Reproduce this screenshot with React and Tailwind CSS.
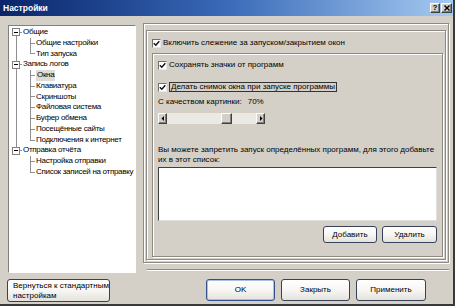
import React from 'react';

const font = "font-['Liberation_Sans',Arial,sans-serif]";

const tree = [
  { label: 'Общие', children: ['Общие настройки', 'Тип запуска'] },
  {
    label: 'Запись логов',
    children: ['Окна', 'Клавиатура', 'Скриншоты', 'Файловая система', 'Буфер обмена', 'Посещённые сайты', 'Подключения к интернет'],
  },
  { label: 'Отправка отчёта', children: ['Настройка отправки', 'Список записей на отправку'] },
];

function Check() {
  return (
    <span className="w-[9px] h-[9px] shrink-0 bg-white border border-t-[#6f6f6f] border-l-[#6f6f6f] border-r-[#e8e8e8] border-b-[#e8e8e8] flex items-center justify-center">
      <svg width="7" height="7" viewBox="0 0 7 7">
        <path d="M0.8 3.2 L2.8 5.3 L6.3 1.2" stroke="#111" strokeWidth="1.4" fill="none" />
      </svg>
    </span>
  );
}

function XpButton({ children, className = '', primary = false }) {
  return (
    <button
      className={
        'rounded-[3px] border bg-linear-to-b from-white via-[#f7f6f3] to-[#e4e2dc] text-black leading-[10px] ' +
        (primary ? 'border-[#34508c] shadow-[inset_0_0_0_1px_#a9bfe6] ' : 'border-[#35425a] ') +
        className
      }
    >
      {children}
    </button>
  );
}

function Raised({ className = '', children }) {
  return (
    <span
      className={
        'bg-[#d4d0c8] border border-t-white border-l-white border-r-[#404040] border-b-[#404040] shadow-[inset_-1px_-1px_0_#808080] flex items-center justify-center shrink-0 ' +
        className
      }
    >
      {children}
    </span>
  );
}

function TopRow({ label, first, last }) {
  return (
    <div className="flex h-[10.77px]">
      <span className="w-[3px] shrink-0" />
      <span className="w-[8px] shrink-0 flex flex-col items-center">
        <span className={first ? 'flex-1' : 'flex-1 w-px bg-[#909090]'} />
        <span className="w-[8px] h-[8px] shrink-0 border border-[#808080] bg-white flex items-center justify-center">
          <span className="w-[4px] h-px bg-black" />
        </span>
        <span className={last ? 'flex-1' : 'flex-1 w-px bg-[#909090]'} />
      </span>
      <span className="w-[2px] shrink-0 flex flex-col">
        <span className="flex-1 border-b border-[#909090]" />
        <span className="flex-1" />
      </span>
      <span className="ml-px leading-[10.77px] whitespace-nowrap">{label}</span>
    </div>
  );
}

function ChildRow({ label, groupLast, last, selected }) {
  return (
    <div className="flex h-[10.77px]">
      <span className="w-[3px] shrink-0" />
      <span className="w-[8px] shrink-0 flex justify-center">
        <span className={groupLast ? 'w-px' : 'w-px bg-[#909090]'} />
      </span>
      <span className="w-[10px] shrink-0" />
      <span className="w-[5px] shrink-0 flex flex-col">
        <span className="flex-1 border-l border-b border-[#909090]" />
        <span className={last ? 'flex-1' : 'flex-1 border-l border-[#909090]'} />
      </span>
      <span className={'ml-px leading-[10.77px] whitespace-nowrap ' + (selected ? 'bg-[#dedcd6] px-px' : '')}>
        {label}
      </span>
    </div>
  );
}

export default function App() {
  return (
    <div
      className={
        'w-[455px] h-[306px] bg-[#d4d0c8] flex flex-col overflow-hidden border-r-2 border-b-2 border-[#3a3a3a] text-[8px] text-black ' +
        font
      }
    >
      {/* title bar */}
      <div className="h-[16px] shrink-0 bg-linear-to-r from-[#0a246a] via-[#3a6ab8] to-[#a6caf0] flex items-center pl-[3px] pr-px">
        <span className="text-white font-bold text-[8.5px] leading-none">Настройки</span>
        <span className="ml-auto flex gap-px">
          <Raised className="w-[10px] h-[10px] text-[8px] font-bold leading-none">?</Raised>
          <Raised className="w-[11px] h-[10px]">
            <svg width="6" height="6" viewBox="0 0 6 6">
              <path d="M0.5 0.5 L5.5 5.5 M5.5 0.5 L0.5 5.5" stroke="#000" strokeWidth="1.4" />
            </svg>
          </Raised>
        </span>
      </div>

      <div className="flex flex-1">
        {/* left column */}
        <div className="w-[143px] shrink-0 pl-[7px] pt-[9px] flex flex-col">
          <div className="ml-px w-[128px] h-[248px] overflow-hidden bg-white border border-t-[#808080] border-l-[#808080] border-r-white border-b-white pt-px tracking-[-0.3px]">
            {tree.map((g, gi) => (
              <React.Fragment key={g.label}>
                <TopRow label={g.label} first={gi === 0} last={gi === tree.length - 1} />
                {g.children.map((c, ci) => (
                  <ChildRow
                    key={c}
                    label={c}
                    groupLast={gi === tree.length - 1}
                    last={ci === g.children.length - 1}
                    selected={c === 'Окна'}
                  />
                ))}
              </React.Fragment>
            ))}
          </div>
          <XpButton className="mt-[6px] w-[103px] h-[23px] text-left pl-[5px]">
            Вернуться к стандартным
            <br />
            настройкам
          </XpButton>
        </div>

        {/* right column */}
        <div className="flex-1 pt-[7px] pr-[4px] flex flex-col">
          <div className="h-[240px] border border-[#8e8b84] shadow-[inset_1px_1px_0_#fff,1px_1px_0_#fff] pt-[6px] px-[2px] pb-[2px] flex">
            <div className="flex-1 border border-[#8e8b84] shadow-[inset_1px_1px_0_#fff,1px_1px_0_#fff] flex flex-col">
              <label className="mt-[7px] ml-[5px] h-[10px] flex items-center gap-[2px]">
                <Check />
                <span className="whitespace-nowrap">Включить слежение за запуском/закрытием окон</span>
              </label>

              <div className="mt-[5px] ml-[5px] mr-[2px] mb-[2px] flex-1 border border-[#8e8b84] shadow-[inset_1px_1px_0_#fff,1px_1px_0_#fff] px-[5px] flex flex-col">
                <label className="mt-[6px] h-[10px] flex items-center gap-[2px]">
                  <Check />
                  <span className="whitespace-nowrap">Сохранять значки от программ</span>
                </label>
                <label className="mt-[12px] h-[10px] flex items-center gap-[2px]">
                  <Check />
                  <span className="whitespace-nowrap border border-[#333] px-px leading-[8px]">
                    Делать снимок окна при запуске программы
                  </span>
                </label>
                <div className="mt-[5px] h-[10px] flex items-center whitespace-nowrap">
                  <span>С качеством картинки:</span>
                  <span className="ml-[6px]">70%</span>
                </div>
                <div className="mt-[6px] w-[107px] h-[11px] flex">
                  <Raised className="w-[9px] h-[11px]">
                    <svg width="4" height="5" viewBox="0 0 4 5">
                      <path d="M3 0 L0.5 2.5 L3 5 Z" fill="#000" />
                    </svg>
                  </Raised>
                  <span className="w-[54px] bg-[#ebe9e4]" />
                  <Raised className="w-[11px] h-[11px]" />
                  <span className="flex-1 bg-[#ebe9e4]" />
                  <Raised className="w-[9px] h-[11px]">
                    <svg width="4" height="5" viewBox="0 0 4 5">
                      <path d="M1 0 L3.5 2.5 L1 5 Z" fill="#000" />
                    </svg>
                  </Raised>
                </div>
                <p className="mt-[21px] leading-[10px] whitespace-nowrap">
                  Вы можете запретить запуск определённых программ, для этого добавьте
                  <br />
                  их в этот список:
                </p>
                <div className="mt-[2px] h-[54px] bg-white border border-t-[#404040] border-l-[#404040] border-r-[#e0e0e0] border-b-[#e0e0e0]" />
                <div className="mt-[5px] flex justify-end gap-[5px]">
                  <XpButton className="w-[54px] h-[17px]">Добавить</XpButton>
                  <XpButton className="w-[55px] h-[17px]">Удалить</XpButton>
                </div>
              </div>
            </div>
          </div>

          <div className="mt-[6px] ml-[4px] h-px bg-[#8e8b84] shadow-[0_1px_0_#fff]" />

          <div className="mt-[9px] pl-[63px] flex gap-[6px]">
            <XpButton primary className="w-[69px] h-[22px]">OK</XpButton>
            <XpButton className="w-[69px] h-[22px]">Закрыть</XpButton>
            <XpButton className="w-[70px] h-[22px]">Применить</XpButton>
          </div>
        </div>
      </div>
    </div>
  );
}
